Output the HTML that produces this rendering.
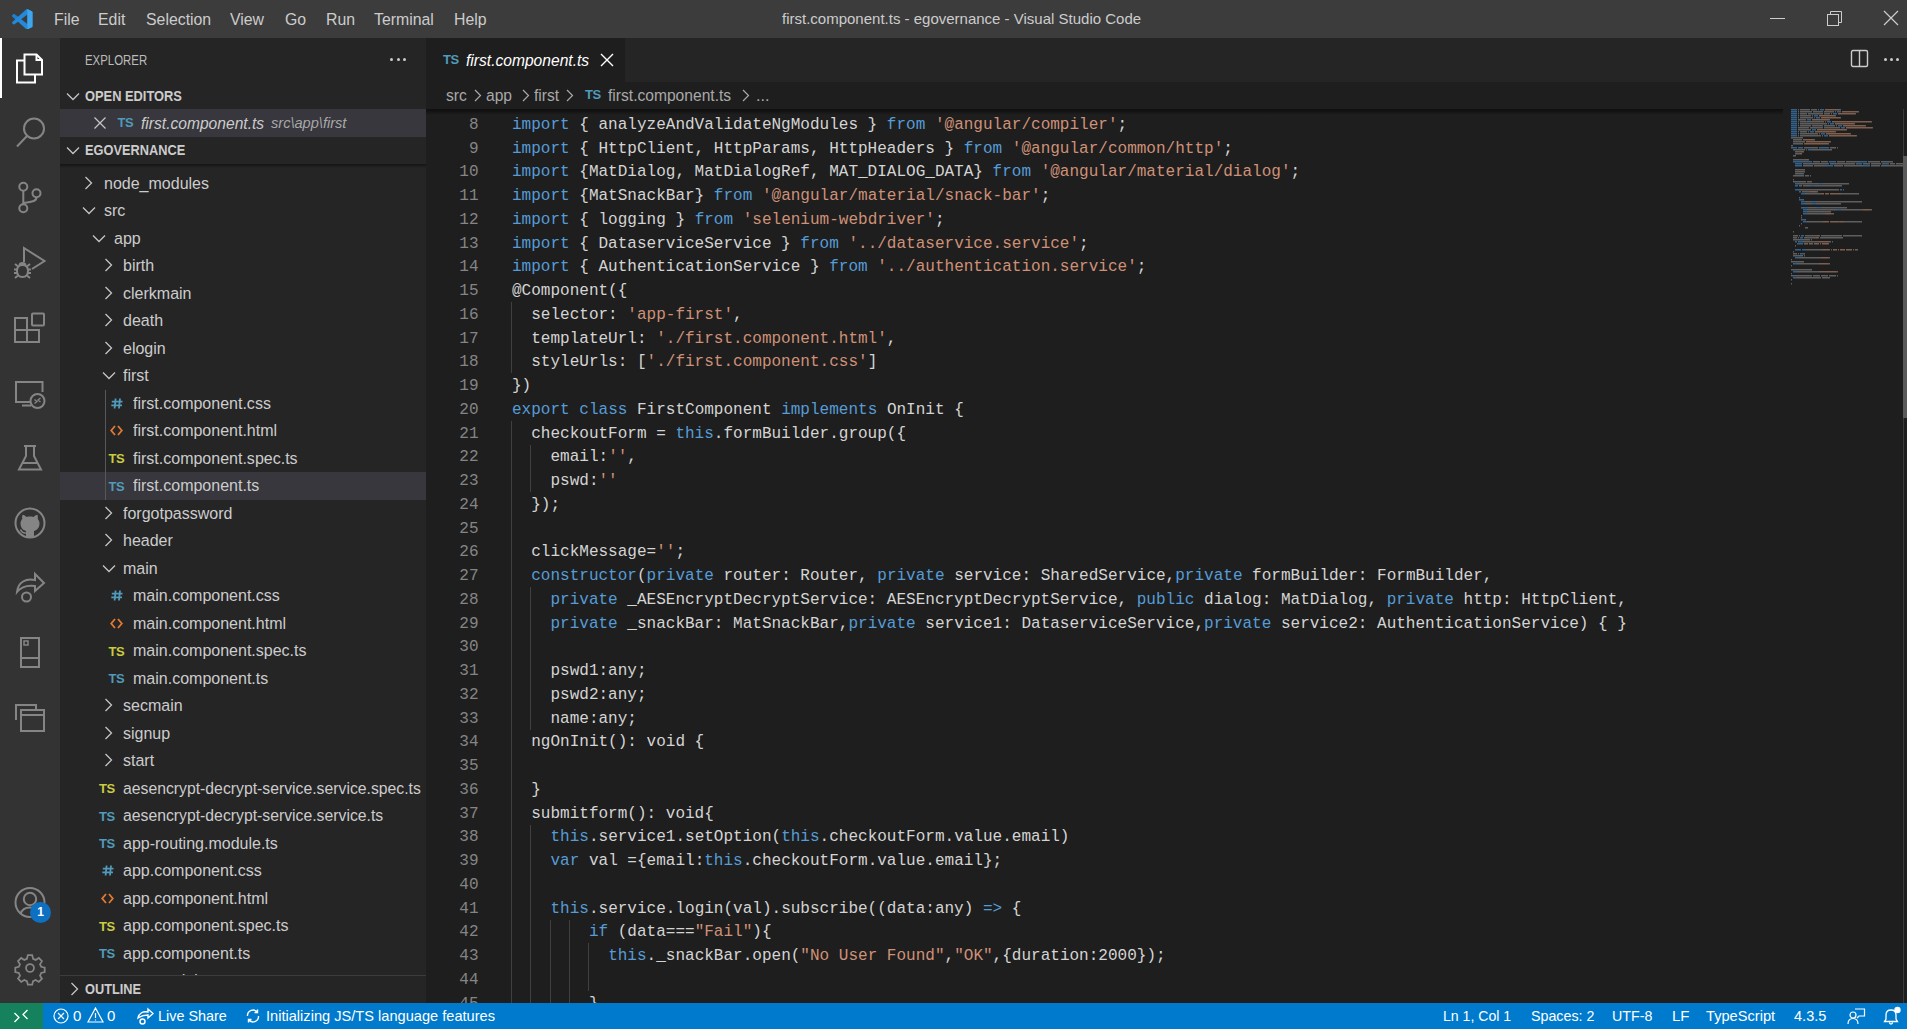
<!DOCTYPE html><html><head><meta charset="utf-8"><style>
*{box-sizing:border-box;margin:0;padding:0}
html,body{width:1907px;height:1029px;overflow:hidden;background:#1e1e1e;font-family:"Liberation Sans", sans-serif;}
.a{position:absolute}
.t{position:absolute;white-space:pre;line-height:1}
.code{position:absolute;white-space:pre;font-family:"Liberation Mono", monospace;font-size:16.03px;line-height:23.75px;color:#d4d4d4;height:23.75px}
.ln{position:absolute;white-space:pre;font-family:"Liberation Mono", monospace;font-size:16.03px;line-height:23.75px;color:#858585;text-align:right;width:60px;left:420px;height:23.75px}
.k{color:#569cd6} .s{color:#ce9178}
.g{position:absolute;width:1px;background:#404040}
.row{position:absolute;left:60px;width:366px;height:27.5px}
.rt{position:absolute;white-space:pre;font-size:16.25px;line-height:27.5px;color:#cccccc;top:0}
</style></head><body><div class="a" style="left:0;top:0;width:1907px;height:38px;background:#3c3c3c"></div><svg class="a" style="left:12px;top:8.8px" width="20.5" height="20.5" viewBox="0 0 100 100">
<path fill-rule="evenodd" fill="#2389d8" d="M70.9119 99.3171C72.4869 99.9307 74.2828 99.8914 75.8725 99.1264L96.4608 89.2197C98.6242 88.1787 100 85.9892 100 83.5872V16.4133C100 14.0113 98.6243 11.8218 96.4609 10.7808L75.8725 0.873756C73.7862 -0.130129 71.3446 0.11576 69.5135 1.44695C69.252 1.63711 69.0028 1.84943 68.769 2.08341L29.3551 38.0415L12.1872 25.0096C10.589 23.7965 8.35363 23.8959 6.86933 25.2461L1.36303 30.2549C-0.452552 31.9064 -0.454633 34.7627 1.35853 36.417L16.2471 50.0001L1.35853 63.5832C-0.454633 65.2374 -0.452552 68.0938 1.36303 69.7453L6.86933 74.7541C8.35363 76.1043 10.589 76.2037 12.1872 74.9905L29.3551 61.9587L68.769 97.9167C69.3925 98.5406 70.1246 99.0104 70.9119 99.3171ZM75.0152 27.2989L45.1091 50.0001L75.0152 72.7012V27.2989Z"/>
<path fill="#3ea6ec" d="M75.0152 0.6 L96.4609 10.7808C98.6243 11.8218 100 14.0113 100 16.4133V83.5872C100 85.9892 98.6242 88.1787 96.4608 89.2197L75.8725 99.1264L75.0152 99.5Z"/>
<path fill="#1b78c4" d="M29.3551 38.0415L12.1872 25.0096C10.589 23.7965 8.35363 23.8959 6.86933 25.2461L1.36303 30.2549C-0.452552 31.9064 -0.454633 34.7627 1.35853 36.417L16.2471 50.0001L29.3551 38.0415Z" opacity="0.6"/>
</svg><div class="t" style="left:54px;top:11px;font-size:16.25px;color:#cccccc;transform:scaleX(0.975);transform-origin:0 0">File</div><div class="t" style="left:98px;top:11px;font-size:16.25px;color:#cccccc;transform:scaleX(0.975);transform-origin:0 0">Edit</div><div class="t" style="left:145.5px;top:11px;font-size:16.25px;color:#cccccc;transform:scaleX(0.975);transform-origin:0 0">Selection</div><div class="t" style="left:230px;top:11px;font-size:16.25px;color:#cccccc;transform:scaleX(0.975);transform-origin:0 0">View</div><div class="t" style="left:284.5px;top:11px;font-size:16.25px;color:#cccccc;transform:scaleX(0.975);transform-origin:0 0">Go</div><div class="t" style="left:325.5px;top:11px;font-size:16.25px;color:#cccccc;transform:scaleX(0.975);transform-origin:0 0">Run</div><div class="t" style="left:373.5px;top:11px;font-size:16.25px;color:#cccccc;transform:scaleX(0.975);transform-origin:0 0">Terminal</div><div class="t" style="left:454px;top:11px;font-size:16.25px;color:#cccccc;transform:scaleX(0.975);transform-origin:0 0">Help</div><div class="t" style="left:782px;top:11px;font-size:15px;color:#cccccc">first.component.ts - egovernance - Visual Studio Code</div><div class="a" style="left:1770px;top:18px;width:15px;height:1px;background:#cccccc"></div><svg class="a" style="left:1826px;top:10px" width="18" height="18" viewBox="0 0 18 18" fill="none" stroke="#cccccc" stroke-width="1">
<rect x="1.5" y="4.5" width="11" height="11"/><path d="M4.5 4.5 V1.5 H15.5 V12.5 H12.5"/></svg><svg class="a" style="left:1883px;top:10px" width="16" height="16" viewBox="0 0 16 16" stroke="#cccccc" stroke-width="1.2">
<path d="M1 1 L15 15 M15 1 L1 15"/></svg><div class="a" style="left:0;top:38px;width:60px;height:965px;background:#333333"></div><div class="a" style="left:0;top:38px;width:2px;height:60px;background:#ffffff"></div><svg class="a" style="left:0;top:38px" width="60" height="965" viewBox="0 38 60 965" fill="none" stroke="#858585" stroke-width="2">
<g stroke="#ffffff">
<path d="M24.5 54.5 H36.5 L42 60 V74.5 H24.5 Z"/>
<path d="M36.5 54.5 V60 H42"/>
<path d="M24.5 60.5 H17 V82.5 H35 V74.5"/>
</g>
<circle cx="34" cy="128.5" r="10"/>
<path d="M27 136 L17 146.5"/>
<circle cx="23.3" cy="186.8" r="4"/>
<circle cx="36.5" cy="193.2" r="4"/>
<circle cx="23.3" cy="208.2" r="4"/>
<path d="M23.3 191 V204 M36.5 197.5 C36.5 202 30 202 24 203"/>
<path d="M24 262 V248 L44.5 261 L32 269"/>
<path d="M22.5 265 c-3.5 0 -5.5 2.5 -5.5 6 c0 3.5 2 6 5.5 6 c3.5 0 5.5 -2.5 5.5 -6 c0 -3.5 -2 -6 -5.5 -6 z M19.5 265.5 c0 -1.5 1.3 -2.5 3 -2.5 c1.7 0 3 1 3 2.5 M17 269.5 h-3 M17 273 h-3 M28 269.5 h3 M28 273 h3 M17.5 276 l-2.5 2 M27.5 276 l2.5 2 M17.5 266 l-2.5 -2 M27.5 266 l2.5 -2"/>
<rect x="15" y="330" width="12" height="12"/><rect x="15" y="318" width="12" height="12"/><rect x="27" y="330" width="12" height="12"/>
<rect x="32" y="313.5" width="12" height="12" rx="1"/>
<path d="M42.5 392 V382 H16 V402 H30 M22 405.5 H31"/>
<circle cx="37.5" cy="401" r="7"/>
<path d="M34.5 399.5 l2.5 2 l-2.5 2 M40.5 398 l-2.5 2 l2.5 2" stroke-width="1.4"/>
<path d="M24 446 H36 M26 446 V456 L19 469.5 H41 L34 456 V446 M22 463 H38"/>
<circle cx="30" cy="523" r="14.5"/>
<path d="M26 537.5 V531 C22.3 530 20.5 527 20.5 523.5 C20.5 521.5 21.3 520 22.3 519 C22 518 22 516.5 22.6 514.8 C24 514.8 25.5 516 26.5 517 C28.5 516.4 31.5 516.4 33.5 517 C34.5 516 36 514.8 37.4 514.8 C38 516.5 38 518 37.7 519 C38.7 520 39.5 521.5 39.5 523.5 C39.5 527 37.7 530 34 531 V537.5 Z" fill="#858585" stroke="none"/>
<path d="M26 533 C23.5 533.3 21.5 532 20.5 529.5" stroke-width="1.6"/>
<path d="M17 592 C18 582 26 578 35 580 V574 L44 583 L35 591 V586 C28 585 21 587 17 592 Z"/>
<circle cx="26.5" cy="597" r="4.5"/>
<rect x="21" y="638" width="18" height="29"/><path d="M21 658 H39"/><rect x="24" y="641" width="4" height="4" stroke-width="1.5"/>
<path d="M16 720 V705 H36 V709"/><rect x="21" y="710" width="23" height="21"/><path d="M21 715 H44"/>
<circle cx="30" cy="902.5" r="14.5"/>
<circle cx="30" cy="899" r="6.2"/>
<path d="M20.5 914 C22 909 26 907.5 30 907.5 C34 907.5 38 909 39.5 914"/>
<g transform="translate(30 968) scale(0.88)">
<path d="M-2.5 -14.5 h5 l1 4 l3 1.3 l3.5 -2.2 l3.6 3.6 l-2.2 3.5 l1.3 3 l4 1 v5 l-4 1 l-1.3 3 l2.2 3.5 l-3.6 3.6 l-3.5 -2.2 l-3 1.3 l-1 4 h-5 l-1 -4 l-3 -1.3 l-3.5 2.2 l-3.6 -3.6 l2.2 -3.5 l-1.3 -3 l-4 -1 v-5 l4 -1 l1.3 -3 l-2.2 -3.5 l3.6 -3.6 l3.5 2.2 l3 -1.3 z"/>
<circle cx="0" cy="0" r="4.5"/>
</g>
</svg><div class="a" style="left:30px;top:902px;width:21px;height:21px;border-radius:50%;background:#0e70c0"></div><div class="t" style="left:30px;top:906px;width:21px;text-align:center;font-size:12px;font-weight:bold;color:#fff">1</div><div class="a" style="left:60px;top:38px;width:366px;height:965px;background:#252526"></div><div class="t" style="left:85px;top:54px;font-size:13.75px;color:#bbbbbb;transform:scaleX(0.83);transform-origin:0 0">EXPLORER</div><div class="a" style="left:390px;top:58px;width:3px;height:3px;border-radius:50%;background:#cccccc"></div><div class="a" style="left:396.5px;top:58px;width:3px;height:3px;border-radius:50%;background:#cccccc"></div><div class="a" style="left:403px;top:58px;width:3px;height:3px;border-radius:50%;background:#cccccc"></div><svg class="a" style="left:66px;top:92px" width="14" height="9" viewBox="0 0 14 9" fill="none" stroke="#c5c5c5" stroke-width="1.3"><path d="M1 1.5 L7 7.5 L13 1.5"/></svg><div class="t" style="left:85px;top:90px;font-size:13.75px;font-weight:bold;color:#cccccc;transform:scaleX(0.935);transform-origin:0 0">OPEN EDITORS</div><div class="a" style="left:60px;top:109px;width:366px;height:27.5px;background:#37373d"></div><svg class="a" style="left:94px;top:117px" width="12" height="12" viewBox="0 0 12 12" stroke="#c5c5c5" stroke-width="1.3"><path d="M0.5 0.5 L11.5 11.5 M11.5 0.5 L0.5 11.5"/></svg><div class="t" style="left:117.5px;top:116px;font-size:13px;font-weight:bold;color:#519aba;letter-spacing:-0.5px">TS</div><div class="t" style="left:140.5px;top:115px;font-size:16.25px;font-style:italic;color:#cccccc;transform:scaleX(0.96);transform-origin:0 0">first.component.ts</div><div class="t" style="left:271px;top:116px;font-size:14.6px;font-style:italic;color:#a8a8a8">src\app\first</div><svg class="a" style="left:66px;top:146px" width="14" height="9" viewBox="0 0 14 9" fill="none" stroke="#c5c5c5" stroke-width="1.3"><path d="M1 1.5 L7 7.5 L13 1.5"/></svg><div class="t" style="left:85px;top:144px;font-size:13.75px;font-weight:bold;color:#cccccc;transform:scaleX(0.93);transform-origin:0 0">EGOVERNANCE</div><div class="a" style="left:60px;top:164px;width:366px;height:811px;overflow:hidden"><svg class="a" style="left:24px;top:11.75px" width="9" height="14" viewBox="0 0 9 14" fill="none" stroke="#c5c5c5" stroke-width="1.3"><path d="M1.5 1 L7.5 7 L1.5 13"/></svg><div class="t" style="left:43.5px;top:10.75px;font-size:16.25px;color:#cccccc;transform:scaleX(0.985);transform-origin:0 0">node_modules</div><svg class="a" style="left:22px;top:42.25px" width="14" height="9" viewBox="0 0 14 9" fill="none" stroke="#c5c5c5" stroke-width="1.3"><path d="M1 1.5 L7 7.5 L13 1.5"/></svg><div class="t" style="left:43.5px;top:38.25px;font-size:16.25px;color:#cccccc;transform:scaleX(0.985);transform-origin:0 0">src</div><svg class="a" style="left:32px;top:69.75px" width="14" height="9" viewBox="0 0 14 9" fill="none" stroke="#c5c5c5" stroke-width="1.3"><path d="M1 1.5 L7 7.5 L13 1.5"/></svg><div class="t" style="left:53.5px;top:65.75px;font-size:16.25px;color:#cccccc;transform:scaleX(0.985);transform-origin:0 0">app</div><svg class="a" style="left:43.5px;top:94.25px" width="9" height="14" viewBox="0 0 9 14" fill="none" stroke="#c5c5c5" stroke-width="1.3"><path d="M1.5 1 L7.5 7 L1.5 13"/></svg><div class="t" style="left:63.0px;top:93.25px;font-size:16.25px;color:#cccccc;transform:scaleX(0.985);transform-origin:0 0">birth</div><svg class="a" style="left:43.5px;top:121.75px" width="9" height="14" viewBox="0 0 9 14" fill="none" stroke="#c5c5c5" stroke-width="1.3"><path d="M1.5 1 L7.5 7 L1.5 13"/></svg><div class="t" style="left:63.0px;top:120.75px;font-size:16.25px;color:#cccccc;transform:scaleX(0.985);transform-origin:0 0">clerkmain</div><svg class="a" style="left:43.5px;top:149.25px" width="9" height="14" viewBox="0 0 9 14" fill="none" stroke="#c5c5c5" stroke-width="1.3"><path d="M1.5 1 L7.5 7 L1.5 13"/></svg><div class="t" style="left:63.0px;top:148.25px;font-size:16.25px;color:#cccccc;transform:scaleX(0.985);transform-origin:0 0">death</div><svg class="a" style="left:43.5px;top:176.75px" width="9" height="14" viewBox="0 0 9 14" fill="none" stroke="#c5c5c5" stroke-width="1.3"><path d="M1.5 1 L7.5 7 L1.5 13"/></svg><div class="t" style="left:63.0px;top:175.75px;font-size:16.25px;color:#cccccc;transform:scaleX(0.985);transform-origin:0 0">elogin</div><svg class="a" style="left:41.5px;top:207.25px" width="14" height="9" viewBox="0 0 14 9" fill="none" stroke="#c5c5c5" stroke-width="1.3"><path d="M1 1.5 L7 7.5 L13 1.5"/></svg><div class="t" style="left:63.0px;top:203.25px;font-size:16.25px;color:#cccccc;transform:scaleX(0.985);transform-origin:0 0">first</div><svg class="a" style="left:51px;top:233.75px" width="12" height="11" viewBox="0 0 12 11" fill="none" stroke="#519aba" stroke-width="1.8"><path d="M4.6 0.5 L3.6 10.5 M9 0.5 L8 10.5 M0.8 3.6 H11.5 M0.3 7.4 H11"/></svg><div class="t" style="left:72.5px;top:230.75px;font-size:16.25px;color:#cccccc;transform:scaleX(0.985);transform-origin:0 0">first.component.css</div><svg class="a" style="left:50px;top:261.25px" width="13" height="11" viewBox="0 0 13 11" fill="none" stroke="#e37933" stroke-width="1.8"><path d="M5 1 L1.2 5.5 L5 10 M8 1 L11.8 5.5 L8 10"/></svg><div class="t" style="left:72.5px;top:258.25px;font-size:16.25px;color:#cccccc;transform:scaleX(0.985);transform-origin:0 0">first.component.html</div><div class="t" style="left:48.5px;top:288.25px;font-size:13px;font-weight:bold;color:#cbcb41;letter-spacing:-0.5px">TS</div><div class="t" style="left:72.5px;top:285.75px;font-size:16.25px;color:#cccccc;transform:scaleX(0.985);transform-origin:0 0">first.component.spec.ts</div><div class="a" style="left:0;top:308.25px;width:366px;height:27.5px;background:#37373d"></div><div class="t" style="left:48.5px;top:315.75px;font-size:13px;font-weight:bold;color:#519aba;letter-spacing:-0.5px">TS</div><div class="t" style="left:72.5px;top:313.25px;font-size:16.25px;color:#cccccc;transform:scaleX(0.985);transform-origin:0 0">first.component.ts</div><svg class="a" style="left:43.5px;top:341.75px" width="9" height="14" viewBox="0 0 9 14" fill="none" stroke="#c5c5c5" stroke-width="1.3"><path d="M1.5 1 L7.5 7 L1.5 13"/></svg><div class="t" style="left:63.0px;top:340.75px;font-size:16.25px;color:#cccccc;transform:scaleX(0.985);transform-origin:0 0">forgotpassword</div><svg class="a" style="left:43.5px;top:369.25px" width="9" height="14" viewBox="0 0 9 14" fill="none" stroke="#c5c5c5" stroke-width="1.3"><path d="M1.5 1 L7.5 7 L1.5 13"/></svg><div class="t" style="left:63.0px;top:368.25px;font-size:16.25px;color:#cccccc;transform:scaleX(0.985);transform-origin:0 0">header</div><svg class="a" style="left:41.5px;top:399.75px" width="14" height="9" viewBox="0 0 14 9" fill="none" stroke="#c5c5c5" stroke-width="1.3"><path d="M1 1.5 L7 7.5 L13 1.5"/></svg><div class="t" style="left:63.0px;top:395.75px;font-size:16.25px;color:#cccccc;transform:scaleX(0.985);transform-origin:0 0">main</div><svg class="a" style="left:51px;top:426.25px" width="12" height="11" viewBox="0 0 12 11" fill="none" stroke="#519aba" stroke-width="1.8"><path d="M4.6 0.5 L3.6 10.5 M9 0.5 L8 10.5 M0.8 3.6 H11.5 M0.3 7.4 H11"/></svg><div class="t" style="left:72.5px;top:423.25px;font-size:16.25px;color:#cccccc;transform:scaleX(0.985);transform-origin:0 0">main.component.css</div><svg class="a" style="left:50px;top:453.75px" width="13" height="11" viewBox="0 0 13 11" fill="none" stroke="#e37933" stroke-width="1.8"><path d="M5 1 L1.2 5.5 L5 10 M8 1 L11.8 5.5 L8 10"/></svg><div class="t" style="left:72.5px;top:450.75px;font-size:16.25px;color:#cccccc;transform:scaleX(0.985);transform-origin:0 0">main.component.html</div><div class="t" style="left:48.5px;top:480.75px;font-size:13px;font-weight:bold;color:#cbcb41;letter-spacing:-0.5px">TS</div><div class="t" style="left:72.5px;top:478.25px;font-size:16.25px;color:#cccccc;transform:scaleX(0.985);transform-origin:0 0">main.component.spec.ts</div><div class="t" style="left:48.5px;top:508.25px;font-size:13px;font-weight:bold;color:#519aba;letter-spacing:-0.5px">TS</div><div class="t" style="left:72.5px;top:505.75px;font-size:16.25px;color:#cccccc;transform:scaleX(0.985);transform-origin:0 0">main.component.ts</div><svg class="a" style="left:43.5px;top:534.25px" width="9" height="14" viewBox="0 0 9 14" fill="none" stroke="#c5c5c5" stroke-width="1.3"><path d="M1.5 1 L7.5 7 L1.5 13"/></svg><div class="t" style="left:63.0px;top:533.25px;font-size:16.25px;color:#cccccc;transform:scaleX(0.985);transform-origin:0 0">secmain</div><svg class="a" style="left:43.5px;top:561.75px" width="9" height="14" viewBox="0 0 9 14" fill="none" stroke="#c5c5c5" stroke-width="1.3"><path d="M1.5 1 L7.5 7 L1.5 13"/></svg><div class="t" style="left:63.0px;top:560.75px;font-size:16.25px;color:#cccccc;transform:scaleX(0.985);transform-origin:0 0">signup</div><svg class="a" style="left:43.5px;top:589.25px" width="9" height="14" viewBox="0 0 9 14" fill="none" stroke="#c5c5c5" stroke-width="1.3"><path d="M1.5 1 L7.5 7 L1.5 13"/></svg><div class="t" style="left:63.0px;top:588.25px;font-size:16.25px;color:#cccccc;transform:scaleX(0.985);transform-origin:0 0">start</div><div class="t" style="left:39.0px;top:618.25px;font-size:13px;font-weight:bold;color:#cbcb41;letter-spacing:-0.5px">TS</div><div class="t" style="left:63.0px;top:615.75px;font-size:16.25px;color:#cccccc;transform:scaleX(0.97);transform-origin:0 0">aesencrypt-decrypt-service.service.spec.ts</div><div class="t" style="left:39.0px;top:645.75px;font-size:13px;font-weight:bold;color:#519aba;letter-spacing:-0.5px">TS</div><div class="t" style="left:63.0px;top:643.25px;font-size:16.25px;color:#cccccc;transform:scaleX(0.97);transform-origin:0 0">aesencrypt-decrypt-service.service.ts</div><div class="t" style="left:39.0px;top:673.25px;font-size:13px;font-weight:bold;color:#519aba;letter-spacing:-0.5px">TS</div><div class="t" style="left:63.0px;top:670.75px;font-size:16.25px;color:#cccccc;transform:scaleX(0.985);transform-origin:0 0">app-routing.module.ts</div><svg class="a" style="left:41.5px;top:701.25px" width="12" height="11" viewBox="0 0 12 11" fill="none" stroke="#519aba" stroke-width="1.8"><path d="M4.6 0.5 L3.6 10.5 M9 0.5 L8 10.5 M0.8 3.6 H11.5 M0.3 7.4 H11"/></svg><div class="t" style="left:63.0px;top:698.25px;font-size:16.25px;color:#cccccc;transform:scaleX(0.985);transform-origin:0 0">app.component.css</div><svg class="a" style="left:40.5px;top:728.75px" width="13" height="11" viewBox="0 0 13 11" fill="none" stroke="#e37933" stroke-width="1.8"><path d="M5 1 L1.2 5.5 L5 10 M8 1 L11.8 5.5 L8 10"/></svg><div class="t" style="left:63.0px;top:725.75px;font-size:16.25px;color:#cccccc;transform:scaleX(0.985);transform-origin:0 0">app.component.html</div><div class="t" style="left:39.0px;top:755.75px;font-size:13px;font-weight:bold;color:#cbcb41;letter-spacing:-0.5px">TS</div><div class="t" style="left:63.0px;top:753.25px;font-size:16.25px;color:#cccccc;transform:scaleX(0.985);transform-origin:0 0">app.component.spec.ts</div><div class="t" style="left:39.0px;top:783.25px;font-size:13px;font-weight:bold;color:#519aba;letter-spacing:-0.5px">TS</div><div class="t" style="left:63.0px;top:780.75px;font-size:16.25px;color:#cccccc;transform:scaleX(0.985);transform-origin:0 0">app.component.ts</div><div class="t" style="left:39.0px;top:810.75px;font-size:13px;font-weight:bold;color:#519aba;letter-spacing:-0.5px">TS</div><div class="t" style="left:63.0px;top:808.25px;font-size:16.25px;color:#cccccc;transform:scaleX(0.985);transform-origin:0 0">app.module.ts</div><div class="a" style="left:45px;top:225.75px;width:1px;height:110.0px;background:#585858"></div></div><div class="a" style="left:60px;top:164px;width:366px;height:4px;background:linear-gradient(#141414,rgba(37,37,38,0))"></div><div class="a" style="left:60px;top:975px;width:366px;height:28px;background:#252526;border-top:1px solid #3c3c3c"></div><svg class="a" style="left:70px;top:982px" width="9" height="14" viewBox="0 0 9 14" fill="none" stroke="#c5c5c5" stroke-width="1.3"><path d="M1.5 1 L7.5 7 L1.5 13"/></svg><div class="t" style="left:85px;top:983px;font-size:13.75px;font-weight:bold;color:#cccccc;transform:scaleX(0.93);transform-origin:0 0">OUTLINE</div><div class="a" style="left:426px;top:38px;width:1481px;height:44px;background:#252526"></div><div class="a" style="left:426px;top:38px;width:199px;height:44px;background:#1e1e1e"></div><div class="t" style="left:443px;top:53px;font-size:13px;font-weight:bold;color:#519aba;letter-spacing:-0.5px">TS</div><div class="t" style="left:466px;top:52px;font-size:16.25px;font-style:italic;color:#ffffff;transform:scaleX(0.96);transform-origin:0 0">first.component.ts</div><svg class="a" style="left:600px;top:53px" width="14" height="14" viewBox="0 0 14 14" stroke="#ffffff" stroke-width="1.4"><path d="M1 1 L13 13 M13 1 L1 13"/></svg><svg class="a" style="left:1850px;top:49px" width="19" height="19" viewBox="0 0 19 19" fill="none" stroke="#cccccc" stroke-width="1.4"><rect x="1.5" y="1.5" width="16" height="16" rx="1.5"/><path d="M9.5 1.5 V17.5"/></svg><div class="a" style="left:1883.5px;top:57.5px;width:3px;height:3px;border-radius:50%;background:#cccccc"></div><div class="a" style="left:1889.5px;top:57.5px;width:3px;height:3px;border-radius:50%;background:#cccccc"></div><div class="a" style="left:1895.5px;top:57.5px;width:3px;height:3px;border-radius:50%;background:#cccccc"></div><div class="a" style="left:426px;top:82px;width:1481px;height:27px;background:#1e1e1e"></div><div class="t" style="left:446px;top:87px;font-size:16.25px;color:#a9a9a9;transform:scaleX(0.96);transform-origin:0 0">src</div><svg class="a" style="left:474px;top:89px" width="8" height="13" viewBox="0 0 8 13" fill="none" stroke="#a9a9a9" stroke-width="1.2"><path d="M1 1 L6.5 6.5 L1 12"/></svg><div class="t" style="left:486px;top:87px;font-size:16.25px;color:#a9a9a9;transform:scaleX(0.96);transform-origin:0 0">app</div><svg class="a" style="left:522px;top:89px" width="8" height="13" viewBox="0 0 8 13" fill="none" stroke="#a9a9a9" stroke-width="1.2"><path d="M1 1 L6.5 6.5 L1 12"/></svg><div class="t" style="left:534px;top:87px;font-size:16.25px;color:#a9a9a9;transform:scaleX(0.96);transform-origin:0 0">first</div><svg class="a" style="left:566px;top:89px" width="8" height="13" viewBox="0 0 8 13" fill="none" stroke="#a9a9a9" stroke-width="1.2"><path d="M1 1 L6.5 6.5 L1 12"/></svg><div class="t" style="left:585px;top:88px;font-size:13px;font-weight:bold;color:#519aba;letter-spacing:-0.5px">TS</div><div class="t" style="left:608px;top:87px;font-size:16.25px;color:#a9a9a9;transform:scaleX(0.96);transform-origin:0 0">first.component.ts</div><svg class="a" style="left:742px;top:89px" width="8" height="13" viewBox="0 0 8 13" fill="none" stroke="#a9a9a9" stroke-width="1.2"><path d="M1 1 L6.5 6.5 L1 12"/></svg><div class="t" style="left:756px;top:87px;font-size:16.25px;color:#a9a9a9">...</div><div class="a" style="left:426px;top:109px;width:1481px;height:894px;overflow:hidden"><div class="ln" style="left:0;top:-18.9px;width:52.5px">7</div><div class="code" style="left:86px;top:-18.9px"><span class="k">import</span> { SharedService } <span class="k">from</span> <span class="s">&#x27;../shared.service&#x27;</span>;</div><div class="ln" style="left:0;top:4.85px;width:52.5px">8</div><div class="code" style="left:86px;top:4.85px"><span class="k">import</span> { analyzeAndValidateNgModules } <span class="k">from</span> <span class="s">&#x27;@angular/compiler&#x27;</span>;</div><div class="ln" style="left:0;top:28.6px;width:52.5px">9</div><div class="code" style="left:86px;top:28.6px"><span class="k">import</span> { HttpClient, HttpParams, HttpHeaders } <span class="k">from</span> <span class="s">&#x27;@angular/common/http&#x27;</span>;</div><div class="ln" style="left:0;top:52.35px;width:52.5px">10</div><div class="code" style="left:86px;top:52.35px"><span class="k">import</span> {MatDialog, MatDialogRef, MAT_DIALOG_DATA} <span class="k">from</span> <span class="s">&#x27;@angular/material/dialog&#x27;</span>;</div><div class="ln" style="left:0;top:76.1px;width:52.5px">11</div><div class="code" style="left:86px;top:76.1px"><span class="k">import</span> {MatSnackBar} <span class="k">from</span> <span class="s">&#x27;@angular/material/snack-bar&#x27;</span>;</div><div class="ln" style="left:0;top:99.85px;width:52.5px">12</div><div class="code" style="left:86px;top:99.85px"><span class="k">import</span> { logging } <span class="k">from</span> <span class="s">&#x27;selenium-webdriver&#x27;</span>;</div><div class="ln" style="left:0;top:123.6px;width:52.5px">13</div><div class="code" style="left:86px;top:123.6px"><span class="k">import</span> { DataserviceService } <span class="k">from</span> <span class="s">&#x27;../dataservice.service&#x27;</span>;</div><div class="ln" style="left:0;top:147.35px;width:52.5px">14</div><div class="code" style="left:86px;top:147.35px"><span class="k">import</span> { AuthenticationService } <span class="k">from</span> <span class="s">&#x27;../authentication.service&#x27;</span>;</div><div class="ln" style="left:0;top:171.1px;width:52.5px">15</div><div class="code" style="left:86px;top:171.1px">@Component({</div><div class="ln" style="left:0;top:194.85px;width:52.5px">16</div><div class="g" style="left:85px;top:193.0px;height:23.75px"></div><div class="code" style="left:86px;top:194.85px">  selector: <span class="s">&#x27;app-first&#x27;</span>,</div><div class="ln" style="left:0;top:218.6px;width:52.5px">17</div><div class="g" style="left:85px;top:216.75px;height:23.75px"></div><div class="code" style="left:86px;top:218.6px">  templateUrl: <span class="s">&#x27;./first.component.html&#x27;</span>,</div><div class="ln" style="left:0;top:242.35px;width:52.5px">18</div><div class="g" style="left:85px;top:240.5px;height:23.75px"></div><div class="code" style="left:86px;top:242.35px">  styleUrls: [<span class="s">&#x27;./first.component.css&#x27;</span>]</div><div class="ln" style="left:0;top:266.1px;width:52.5px">19</div><div class="code" style="left:86px;top:266.1px">})</div><div class="ln" style="left:0;top:289.85px;width:52.5px">20</div><div class="code" style="left:86px;top:289.85px"><span class="k">export</span> <span class="k">class</span> FirstComponent <span class="k">implements</span> OnInit {</div><div class="ln" style="left:0;top:313.6px;width:52.5px">21</div><div class="g" style="left:85px;top:311.75px;height:23.75px"></div><div class="code" style="left:86px;top:313.6px">  checkoutForm = <span class="k">this</span>.formBuilder.group({</div><div class="ln" style="left:0;top:337.35px;width:52.5px">22</div><div class="g" style="left:85px;top:335.5px;height:23.75px"></div><div class="g" style="left:104px;top:335.5px;height:23.75px"></div><div class="code" style="left:86px;top:337.35px">    email:<span class="s">&#x27;&#x27;</span>,</div><div class="ln" style="left:0;top:361.1px;width:52.5px">23</div><div class="g" style="left:85px;top:359.25px;height:23.75px"></div><div class="g" style="left:104px;top:359.25px;height:23.75px"></div><div class="code" style="left:86px;top:361.1px">    pswd:<span class="s">&#x27;&#x27;</span></div><div class="ln" style="left:0;top:384.85px;width:52.5px">24</div><div class="g" style="left:85px;top:383.0px;height:23.75px"></div><div class="code" style="left:86px;top:384.85px">  });</div><div class="ln" style="left:0;top:408.6px;width:52.5px">25</div><div class="g" style="left:85px;top:406.75px;height:23.75px"></div><div class="code" style="left:86px;top:408.6px"></div><div class="ln" style="left:0;top:432.35px;width:52.5px">26</div><div class="g" style="left:85px;top:430.5px;height:23.75px"></div><div class="code" style="left:86px;top:432.35px">  clickMessage=<span class="s">&#x27;&#x27;</span>;</div><div class="ln" style="left:0;top:456.1px;width:52.5px">27</div><div class="g" style="left:85px;top:454.25px;height:23.75px"></div><div class="code" style="left:86px;top:456.1px">  <span class="k">constructor</span>(<span class="k">private</span> router: Router, <span class="k">private</span> service: SharedService,<span class="k">private</span> formBuilder: FormBuilder,</div><div class="ln" style="left:0;top:479.85px;width:52.5px">28</div><div class="g" style="left:85px;top:478.0px;height:23.75px"></div><div class="g" style="left:104px;top:478.0px;height:23.75px"></div><div class="code" style="left:86px;top:479.85px">    <span class="k">private</span> _AESEncryptDecryptService: AESEncryptDecryptService, <span class="k">public</span> dialog: MatDialog, <span class="k">private</span> http: HttpClient,</div><div class="ln" style="left:0;top:503.6px;width:52.5px">29</div><div class="g" style="left:85px;top:501.75px;height:23.75px"></div><div class="g" style="left:104px;top:501.75px;height:23.75px"></div><div class="code" style="left:86px;top:503.6px">    <span class="k">private</span> _snackBar: MatSnackBar,<span class="k">private</span> service1: DataserviceService,<span class="k">private</span> service2: AuthenticationService) { }</div><div class="ln" style="left:0;top:527.35px;width:52.5px">30</div><div class="g" style="left:85px;top:525.5px;height:23.75px"></div><div class="g" style="left:104px;top:525.5px;height:23.75px"></div><div class="code" style="left:86px;top:527.35px"></div><div class="ln" style="left:0;top:551.1px;width:52.5px">31</div><div class="g" style="left:85px;top:549.25px;height:23.75px"></div><div class="g" style="left:104px;top:549.25px;height:23.75px"></div><div class="code" style="left:86px;top:551.1px">    pswd1:any;</div><div class="ln" style="left:0;top:574.85px;width:52.5px">32</div><div class="g" style="left:85px;top:573.0px;height:23.75px"></div><div class="g" style="left:104px;top:573.0px;height:23.75px"></div><div class="code" style="left:86px;top:574.85px">    pswd2:any;</div><div class="ln" style="left:0;top:598.6px;width:52.5px">33</div><div class="g" style="left:85px;top:596.75px;height:23.75px"></div><div class="g" style="left:104px;top:596.75px;height:23.75px"></div><div class="code" style="left:86px;top:598.6px">    name:any;</div><div class="ln" style="left:0;top:622.35px;width:52.5px">34</div><div class="g" style="left:85px;top:620.5px;height:23.75px"></div><div class="code" style="left:86px;top:622.35px">  ngOnInit(): void {</div><div class="ln" style="left:0;top:646.1px;width:52.5px">35</div><div class="g" style="left:85px;top:644.25px;height:23.75px"></div><div class="code" style="left:86px;top:646.1px"></div><div class="ln" style="left:0;top:669.85px;width:52.5px">36</div><div class="g" style="left:85px;top:668.0px;height:23.75px"></div><div class="code" style="left:86px;top:669.85px">  }</div><div class="ln" style="left:0;top:693.6px;width:52.5px">37</div><div class="g" style="left:85px;top:691.75px;height:23.75px"></div><div class="code" style="left:86px;top:693.6px">  submitform(): void{</div><div class="ln" style="left:0;top:717.35px;width:52.5px">38</div><div class="g" style="left:85px;top:715.5px;height:23.75px"></div><div class="g" style="left:104px;top:715.5px;height:23.75px"></div><div class="code" style="left:86px;top:717.35px">    <span class="k">this</span>.service1.setOption(<span class="k">this</span>.checkoutForm.value.email)</div><div class="ln" style="left:0;top:741.1px;width:52.5px">39</div><div class="g" style="left:85px;top:739.25px;height:23.75px"></div><div class="g" style="left:104px;top:739.25px;height:23.75px"></div><div class="code" style="left:86px;top:741.1px">    <span class="k">var</span> val ={email:<span class="k">this</span>.checkoutForm.value.email};</div><div class="ln" style="left:0;top:764.85px;width:52.5px">40</div><div class="g" style="left:85px;top:763.0px;height:23.75px"></div><div class="g" style="left:104px;top:763.0px;height:23.75px"></div><div class="code" style="left:86px;top:764.85px"></div><div class="ln" style="left:0;top:788.6px;width:52.5px">41</div><div class="g" style="left:85px;top:786.75px;height:23.75px"></div><div class="g" style="left:104px;top:786.75px;height:23.75px"></div><div class="code" style="left:86px;top:788.6px">    <span class="k">this</span>.service.login(val).subscribe((data:any) <span class="k">=&gt;</span> {</div><div class="ln" style="left:0;top:812.35px;width:52.5px">42</div><div class="g" style="left:85px;top:810.5px;height:23.75px"></div><div class="g" style="left:104px;top:810.5px;height:23.75px"></div><div class="g" style="left:124px;top:810.5px;height:23.75px"></div><div class="g" style="left:143px;top:810.5px;height:23.75px"></div><div class="code" style="left:86px;top:812.35px">        <span class="k">if</span> (data===<span class="s">&quot;Fail&quot;</span>){</div><div class="ln" style="left:0;top:836.1px;width:52.5px">43</div><div class="g" style="left:85px;top:834.25px;height:23.75px"></div><div class="g" style="left:104px;top:834.25px;height:23.75px"></div><div class="g" style="left:124px;top:834.25px;height:23.75px"></div><div class="g" style="left:143px;top:834.25px;height:23.75px"></div><div class="g" style="left:162px;top:834.25px;height:23.75px"></div><div class="code" style="left:86px;top:836.1px">          <span class="k">this</span>._snackBar.open(<span class="s">&quot;No User Found&quot;</span>,<span class="s">&quot;OK&quot;</span>,{duration:2000});</div><div class="ln" style="left:0;top:859.85px;width:52.5px">44</div><div class="g" style="left:85px;top:858.0px;height:23.75px"></div><div class="g" style="left:104px;top:858.0px;height:23.75px"></div><div class="g" style="left:124px;top:858.0px;height:23.75px"></div><div class="g" style="left:143px;top:858.0px;height:23.75px"></div><div class="g" style="left:162px;top:858.0px;height:23.75px"></div><div class="code" style="left:86px;top:859.85px"></div><div class="ln" style="left:0;top:883.6px;width:52.5px">45</div><div class="g" style="left:85px;top:881.75px;height:23.75px"></div><div class="g" style="left:104px;top:881.75px;height:23.75px"></div><div class="g" style="left:124px;top:881.75px;height:23.75px"></div><div class="g" style="left:143px;top:881.75px;height:23.75px"></div><div class="code" style="left:86px;top:883.6px">        }</div><div class="ln" style="left:0;top:907.35px;width:52.5px">46</div><div class="g" style="left:85px;top:905.5px;height:23.75px"></div><div class="g" style="left:104px;top:905.5px;height:23.75px"></div><div class="g" style="left:124px;top:905.5px;height:23.75px"></div><div class="g" style="left:143px;top:905.5px;height:23.75px"></div><div class="code" style="left:86px;top:907.35px"></div></div><div class="a" style="left:426px;top:109px;width:1357px;height:6px;background:linear-gradient(rgba(0,0,0,0.55),rgba(0,0,0,0))"></div><svg class="a" style="left:0;top:0" width="1907" height="1029" viewBox="0 0 1907 1029"><rect x="1791" y="109.0" width="6" height="1.5" fill="#32628c"/><rect x="1798" y="109.0" width="1" height="1.5" fill="#5e5e5e"/><rect x="1800" y="109.0" width="9" height="1.5" fill="#5e5e5e"/><rect x="1809" y="109.0" width="1" height="1.5" fill="#5e5e5e"/><rect x="1811" y="109.0" width="6" height="1.5" fill="#5e5e5e"/><rect x="1818" y="109.0" width="1" height="1.5" fill="#5e5e5e"/><rect x="1820" y="109.0" width="4" height="1.5" fill="#32628c"/><rect x="1825" y="109.0" width="15" height="1.5" fill="#7e5e4c"/><rect x="1840" y="109.0" width="1" height="1.5" fill="#5e5e5e"/><rect x="1791" y="111.0" width="6" height="1.5" fill="#32628c"/><rect x="1798" y="111.0" width="1" height="1.5" fill="#5e5e5e"/><rect x="1800" y="111.0" width="11" height="1.5" fill="#5e5e5e"/><rect x="1811" y="111.0" width="1" height="1.5" fill="#5e5e5e"/><rect x="1813" y="111.0" width="9" height="1.5" fill="#5e5e5e"/><rect x="1822" y="111.0" width="1" height="1.5" fill="#5e5e5e"/><rect x="1824" y="111.0" width="10" height="1.5" fill="#5e5e5e"/><rect x="1835" y="111.0" width="1" height="1.5" fill="#5e5e5e"/><rect x="1837" y="111.0" width="4" height="1.5" fill="#32628c"/><rect x="1842" y="111.0" width="16" height="1.5" fill="#7e5e4c"/><rect x="1858" y="111.0" width="1" height="1.5" fill="#5e5e5e"/><rect x="1791" y="113.0" width="6" height="1.5" fill="#32628c"/><rect x="1798" y="113.0" width="1" height="1.5" fill="#5e5e5e"/><rect x="1800" y="113.0" width="6" height="1.5" fill="#5e5e5e"/><rect x="1806" y="113.0" width="1" height="1.5" fill="#5e5e5e"/><rect x="1808" y="113.0" width="14" height="1.5" fill="#5e5e5e"/><rect x="1822" y="113.0" width="1" height="1.5" fill="#5e5e5e"/><rect x="1824" y="113.0" width="6" height="1.5" fill="#5e5e5e"/><rect x="1831" y="113.0" width="1" height="1.5" fill="#5e5e5e"/><rect x="1833" y="113.0" width="4" height="1.5" fill="#32628c"/><rect x="1838" y="113.0" width="17" height="1.5" fill="#7e5e4c"/><rect x="1855" y="113.0" width="1" height="1.5" fill="#5e5e5e"/><rect x="1791" y="115.0" width="6" height="1.5" fill="#32628c"/><rect x="1798" y="115.0" width="1" height="1.5" fill="#5e5e5e"/><rect x="1800" y="115.0" width="11" height="1.5" fill="#5e5e5e"/><rect x="1812" y="115.0" width="1" height="1.5" fill="#5e5e5e"/><rect x="1814" y="115.0" width="4" height="1.5" fill="#32628c"/><rect x="1819" y="115.0" width="16" height="1.5" fill="#7e5e4c"/><rect x="1835" y="115.0" width="1" height="1.5" fill="#5e5e5e"/><rect x="1791" y="117.0" width="6" height="1.5" fill="#32628c"/><rect x="1798" y="117.0" width="1" height="1.5" fill="#5e5e5e"/><rect x="1800" y="117.0" width="13" height="1.5" fill="#5e5e5e"/><rect x="1814" y="117.0" width="1" height="1.5" fill="#5e5e5e"/><rect x="1816" y="117.0" width="4" height="1.5" fill="#32628c"/><rect x="1821" y="117.0" width="19" height="1.5" fill="#7e5e4c"/><rect x="1840" y="117.0" width="1" height="1.5" fill="#5e5e5e"/><rect x="1791" y="119.0" width="6" height="1.5" fill="#32628c"/><rect x="1798" y="119.0" width="1" height="1.5" fill="#5e5e5e"/><rect x="1799" y="119.0" width="6" height="1.5" fill="#5e5e5e"/><rect x="1805" y="119.0" width="1" height="1.5" fill="#5e5e5e"/><rect x="1807" y="119.0" width="4" height="1.5" fill="#32628c"/><rect x="1812" y="119.0" width="17" height="1.5" fill="#7e5e4c"/><rect x="1829" y="119.0" width="1" height="1.5" fill="#5e5e5e"/><rect x="1791" y="121.0" width="6" height="1.5" fill="#32628c"/><rect x="1798" y="121.0" width="1" height="1.5" fill="#5e5e5e"/><rect x="1800" y="121.0" width="24" height="1.5" fill="#5e5e5e"/><rect x="1825" y="121.0" width="1" height="1.5" fill="#5e5e5e"/><rect x="1827" y="121.0" width="4" height="1.5" fill="#32628c"/><rect x="1832" y="121.0" width="39" height="1.5" fill="#7e5e4c"/><rect x="1871" y="121.0" width="1" height="1.5" fill="#5e5e5e"/><rect x="1791" y="123.0" width="6" height="1.5" fill="#32628c"/><rect x="1798" y="123.0" width="1" height="1.5" fill="#5e5e5e"/><rect x="1800" y="123.0" width="27" height="1.5" fill="#5e5e5e"/><rect x="1828" y="123.0" width="1" height="1.5" fill="#5e5e5e"/><rect x="1830" y="123.0" width="4" height="1.5" fill="#32628c"/><rect x="1835" y="123.0" width="19" height="1.5" fill="#7e5e4c"/><rect x="1854" y="123.0" width="1" height="1.5" fill="#5e5e5e"/><rect x="1791" y="125.0" width="6" height="1.5" fill="#32628c"/><rect x="1798" y="125.0" width="1" height="1.5" fill="#5e5e5e"/><rect x="1800" y="125.0" width="10" height="1.5" fill="#5e5e5e"/><rect x="1810" y="125.0" width="1" height="1.5" fill="#5e5e5e"/><rect x="1812" y="125.0" width="10" height="1.5" fill="#5e5e5e"/><rect x="1822" y="125.0" width="1" height="1.5" fill="#5e5e5e"/><rect x="1824" y="125.0" width="11" height="1.5" fill="#5e5e5e"/><rect x="1836" y="125.0" width="1" height="1.5" fill="#5e5e5e"/><rect x="1838" y="125.0" width="4" height="1.5" fill="#32628c"/><rect x="1843" y="125.0" width="22" height="1.5" fill="#7e5e4c"/><rect x="1865" y="125.0" width="1" height="1.5" fill="#5e5e5e"/><rect x="1791" y="127.0" width="6" height="1.5" fill="#32628c"/><rect x="1798" y="127.0" width="1" height="1.5" fill="#5e5e5e"/><rect x="1799" y="127.0" width="9" height="1.5" fill="#5e5e5e"/><rect x="1808" y="127.0" width="1" height="1.5" fill="#5e5e5e"/><rect x="1810" y="127.0" width="12" height="1.5" fill="#5e5e5e"/><rect x="1822" y="127.0" width="1" height="1.5" fill="#5e5e5e"/><rect x="1824" y="127.0" width="15" height="1.5" fill="#5e5e5e"/><rect x="1839" y="127.0" width="1" height="1.5" fill="#5e5e5e"/><rect x="1841" y="127.0" width="4" height="1.5" fill="#32628c"/><rect x="1846" y="127.0" width="26" height="1.5" fill="#7e5e4c"/><rect x="1872" y="127.0" width="1" height="1.5" fill="#5e5e5e"/><rect x="1791" y="129.0" width="6" height="1.5" fill="#32628c"/><rect x="1798" y="129.0" width="1" height="1.5" fill="#5e5e5e"/><rect x="1799" y="129.0" width="11" height="1.5" fill="#5e5e5e"/><rect x="1810" y="129.0" width="1" height="1.5" fill="#5e5e5e"/><rect x="1812" y="129.0" width="4" height="1.5" fill="#32628c"/><rect x="1817" y="129.0" width="29" height="1.5" fill="#7e5e4c"/><rect x="1846" y="129.0" width="1" height="1.5" fill="#5e5e5e"/><rect x="1791" y="131.0" width="6" height="1.5" fill="#32628c"/><rect x="1798" y="131.0" width="1" height="1.5" fill="#5e5e5e"/><rect x="1800" y="131.0" width="7" height="1.5" fill="#5e5e5e"/><rect x="1808" y="131.0" width="1" height="1.5" fill="#5e5e5e"/><rect x="1810" y="131.0" width="4" height="1.5" fill="#32628c"/><rect x="1815" y="131.0" width="20" height="1.5" fill="#7e5e4c"/><rect x="1835" y="131.0" width="1" height="1.5" fill="#5e5e5e"/><rect x="1791" y="133.0" width="6" height="1.5" fill="#32628c"/><rect x="1798" y="133.0" width="1" height="1.5" fill="#5e5e5e"/><rect x="1800" y="133.0" width="18" height="1.5" fill="#5e5e5e"/><rect x="1819" y="133.0" width="1" height="1.5" fill="#5e5e5e"/><rect x="1821" y="133.0" width="4" height="1.5" fill="#32628c"/><rect x="1826" y="133.0" width="24" height="1.5" fill="#7e5e4c"/><rect x="1850" y="133.0" width="1" height="1.5" fill="#5e5e5e"/><rect x="1791" y="135.0" width="6" height="1.5" fill="#32628c"/><rect x="1798" y="135.0" width="1" height="1.5" fill="#5e5e5e"/><rect x="1800" y="135.0" width="21" height="1.5" fill="#5e5e5e"/><rect x="1822" y="135.0" width="1" height="1.5" fill="#5e5e5e"/><rect x="1824" y="135.0" width="4" height="1.5" fill="#32628c"/><rect x="1829" y="135.0" width="27" height="1.5" fill="#7e5e4c"/><rect x="1856" y="135.0" width="1" height="1.5" fill="#5e5e5e"/><rect x="1791" y="137.0" width="10" height="1.5" fill="#5e5e5e"/><rect x="1801" y="137.0" width="1" height="1.5" fill="#5e5e5e"/><rect x="1802" y="137.0" width="1" height="1.5" fill="#5e5e5e"/><rect x="1793" y="139.0" width="8" height="1.5" fill="#5e5e5e"/><rect x="1801" y="139.0" width="1" height="1.5" fill="#5e5e5e"/><rect x="1803" y="139.0" width="11" height="1.5" fill="#7e5e4c"/><rect x="1814" y="139.0" width="1" height="1.5" fill="#5e5e5e"/><rect x="1793" y="141.0" width="11" height="1.5" fill="#5e5e5e"/><rect x="1804" y="141.0" width="1" height="1.5" fill="#5e5e5e"/><rect x="1806" y="141.0" width="24" height="1.5" fill="#7e5e4c"/><rect x="1830" y="141.0" width="1" height="1.5" fill="#5e5e5e"/><rect x="1793" y="143.0" width="9" height="1.5" fill="#5e5e5e"/><rect x="1802" y="143.0" width="1" height="1.5" fill="#5e5e5e"/><rect x="1804" y="143.0" width="1" height="1.5" fill="#5e5e5e"/><rect x="1805" y="143.0" width="23" height="1.5" fill="#7e5e4c"/><rect x="1828" y="143.0" width="1" height="1.5" fill="#5e5e5e"/><rect x="1791" y="145.0" width="1" height="1.5" fill="#5e5e5e"/><rect x="1792" y="145.0" width="1" height="1.5" fill="#5e5e5e"/><rect x="1791" y="147.0" width="6" height="1.5" fill="#32628c"/><rect x="1798" y="147.0" width="5" height="1.5" fill="#32628c"/><rect x="1804" y="147.0" width="14" height="1.5" fill="#5e5e5e"/><rect x="1819" y="147.0" width="10" height="1.5" fill="#32628c"/><rect x="1830" y="147.0" width="6" height="1.5" fill="#5e5e5e"/><rect x="1837" y="147.0" width="1" height="1.5" fill="#5e5e5e"/><rect x="1793" y="149.0" width="12" height="1.5" fill="#5e5e5e"/><rect x="1806" y="149.0" width="1" height="1.5" fill="#5e5e5e"/><rect x="1808" y="149.0" width="4" height="1.5" fill="#32628c"/><rect x="1812" y="149.0" width="1" height="1.5" fill="#5e5e5e"/><rect x="1813" y="149.0" width="11" height="1.5" fill="#5e5e5e"/><rect x="1824" y="149.0" width="1" height="1.5" fill="#5e5e5e"/><rect x="1825" y="149.0" width="5" height="1.5" fill="#5e5e5e"/><rect x="1830" y="149.0" width="1" height="1.5" fill="#5e5e5e"/><rect x="1831" y="149.0" width="1" height="1.5" fill="#5e5e5e"/><rect x="1795" y="151.0" width="5" height="1.5" fill="#5e5e5e"/><rect x="1800" y="151.0" width="1" height="1.5" fill="#5e5e5e"/><rect x="1801" y="151.0" width="2" height="1.5" fill="#7e5e4c"/><rect x="1803" y="151.0" width="1" height="1.5" fill="#5e5e5e"/><rect x="1795" y="153.0" width="4" height="1.5" fill="#5e5e5e"/><rect x="1799" y="153.0" width="1" height="1.5" fill="#5e5e5e"/><rect x="1800" y="153.0" width="2" height="1.5" fill="#7e5e4c"/><rect x="1793" y="155.0" width="1" height="1.5" fill="#5e5e5e"/><rect x="1794" y="155.0" width="1" height="1.5" fill="#5e5e5e"/><rect x="1795" y="155.0" width="1" height="1.5" fill="#5e5e5e"/><rect x="1793" y="159.0" width="12" height="1.5" fill="#5e5e5e"/><rect x="1805" y="159.0" width="1" height="1.5" fill="#5e5e5e"/><rect x="1806" y="159.0" width="2" height="1.5" fill="#7e5e4c"/><rect x="1808" y="159.0" width="1" height="1.5" fill="#5e5e5e"/><rect x="1793" y="161.0" width="11" height="1.5" fill="#32628c"/><rect x="1804" y="161.0" width="1" height="1.5" fill="#5e5e5e"/><rect x="1805" y="161.0" width="7" height="1.5" fill="#32628c"/><rect x="1813" y="161.0" width="6" height="1.5" fill="#5e5e5e"/><rect x="1819" y="161.0" width="1" height="1.5" fill="#5e5e5e"/><rect x="1821" y="161.0" width="6" height="1.5" fill="#5e5e5e"/><rect x="1827" y="161.0" width="1" height="1.5" fill="#5e5e5e"/><rect x="1829" y="161.0" width="7" height="1.5" fill="#32628c"/><rect x="1837" y="161.0" width="7" height="1.5" fill="#5e5e5e"/><rect x="1844" y="161.0" width="1" height="1.5" fill="#5e5e5e"/><rect x="1846" y="161.0" width="13" height="1.5" fill="#5e5e5e"/><rect x="1859" y="161.0" width="1" height="1.5" fill="#5e5e5e"/><rect x="1860" y="161.0" width="7" height="1.5" fill="#32628c"/><rect x="1868" y="161.0" width="11" height="1.5" fill="#5e5e5e"/><rect x="1879" y="161.0" width="1" height="1.5" fill="#5e5e5e"/><rect x="1881" y="161.0" width="11" height="1.5" fill="#5e5e5e"/><rect x="1892" y="161.0" width="1" height="1.5" fill="#5e5e5e"/><rect x="1795" y="163.0" width="7" height="1.5" fill="#32628c"/><rect x="1803" y="163.0" width="25" height="1.5" fill="#5e5e5e"/><rect x="1828" y="163.0" width="1" height="1.5" fill="#5e5e5e"/><rect x="1830" y="163.0" width="24" height="1.5" fill="#5e5e5e"/><rect x="1854" y="163.0" width="1" height="1.5" fill="#5e5e5e"/><rect x="1856" y="163.0" width="6" height="1.5" fill="#32628c"/><rect x="1863" y="163.0" width="6" height="1.5" fill="#5e5e5e"/><rect x="1869" y="163.0" width="1" height="1.5" fill="#5e5e5e"/><rect x="1871" y="163.0" width="9" height="1.5" fill="#5e5e5e"/><rect x="1880" y="163.0" width="1" height="1.5" fill="#5e5e5e"/><rect x="1882" y="163.0" width="7" height="1.5" fill="#32628c"/><rect x="1890" y="163.0" width="4" height="1.5" fill="#5e5e5e"/><rect x="1894" y="163.0" width="1" height="1.5" fill="#5e5e5e"/><rect x="1896" y="163.0" width="7" height="1.5" fill="#5e5e5e"/><rect x="1795" y="165.0" width="7" height="1.5" fill="#32628c"/><rect x="1803" y="165.0" width="9" height="1.5" fill="#5e5e5e"/><rect x="1812" y="165.0" width="1" height="1.5" fill="#5e5e5e"/><rect x="1814" y="165.0" width="11" height="1.5" fill="#5e5e5e"/><rect x="1825" y="165.0" width="1" height="1.5" fill="#5e5e5e"/><rect x="1826" y="165.0" width="7" height="1.5" fill="#32628c"/><rect x="1834" y="165.0" width="8" height="1.5" fill="#5e5e5e"/><rect x="1842" y="165.0" width="1" height="1.5" fill="#5e5e5e"/><rect x="1844" y="165.0" width="18" height="1.5" fill="#5e5e5e"/><rect x="1862" y="165.0" width="1" height="1.5" fill="#5e5e5e"/><rect x="1863" y="165.0" width="7" height="1.5" fill="#32628c"/><rect x="1871" y="165.0" width="8" height="1.5" fill="#5e5e5e"/><rect x="1879" y="165.0" width="1" height="1.5" fill="#5e5e5e"/><rect x="1881" y="165.0" width="21" height="1.5" fill="#5e5e5e"/><rect x="1902" y="165.0" width="1" height="1.5" fill="#5e5e5e"/><rect x="1795" y="169.0" width="5" height="1.5" fill="#5e5e5e"/><rect x="1800" y="169.0" width="1" height="1.5" fill="#5e5e5e"/><rect x="1801" y="169.0" width="3" height="1.5" fill="#5e5e5e"/><rect x="1804" y="169.0" width="1" height="1.5" fill="#5e5e5e"/><rect x="1795" y="171.0" width="5" height="1.5" fill="#5e5e5e"/><rect x="1800" y="171.0" width="1" height="1.5" fill="#5e5e5e"/><rect x="1801" y="171.0" width="3" height="1.5" fill="#5e5e5e"/><rect x="1804" y="171.0" width="1" height="1.5" fill="#5e5e5e"/><rect x="1795" y="173.0" width="4" height="1.5" fill="#5e5e5e"/><rect x="1799" y="173.0" width="1" height="1.5" fill="#5e5e5e"/><rect x="1800" y="173.0" width="3" height="1.5" fill="#5e5e5e"/><rect x="1803" y="173.0" width="1" height="1.5" fill="#5e5e5e"/><rect x="1793" y="175.0" width="8" height="1.5" fill="#5e5e5e"/><rect x="1801" y="175.0" width="1" height="1.5" fill="#5e5e5e"/><rect x="1802" y="175.0" width="1" height="1.5" fill="#5e5e5e"/><rect x="1803" y="175.0" width="1" height="1.5" fill="#5e5e5e"/><rect x="1805" y="175.0" width="4" height="1.5" fill="#5e5e5e"/><rect x="1810" y="175.0" width="1" height="1.5" fill="#5e5e5e"/><rect x="1793" y="179.0" width="1" height="1.5" fill="#5e5e5e"/><rect x="1793" y="181.0" width="10" height="1.5" fill="#5e5e5e"/><rect x="1803" y="181.0" width="1" height="1.5" fill="#5e5e5e"/><rect x="1804" y="181.0" width="1" height="1.5" fill="#5e5e5e"/><rect x="1805" y="181.0" width="1" height="1.5" fill="#5e5e5e"/><rect x="1807" y="181.0" width="4" height="1.5" fill="#5e5e5e"/><rect x="1811" y="181.0" width="1" height="1.5" fill="#5e5e5e"/><rect x="1795" y="183.0" width="4" height="1.5" fill="#32628c"/><rect x="1799" y="183.0" width="1" height="1.5" fill="#5e5e5e"/><rect x="1800" y="183.0" width="8" height="1.5" fill="#5e5e5e"/><rect x="1808" y="183.0" width="1" height="1.5" fill="#5e5e5e"/><rect x="1809" y="183.0" width="9" height="1.5" fill="#5e5e5e"/><rect x="1818" y="183.0" width="1" height="1.5" fill="#5e5e5e"/><rect x="1819" y="183.0" width="4" height="1.5" fill="#32628c"/><rect x="1823" y="183.0" width="1" height="1.5" fill="#5e5e5e"/><rect x="1824" y="183.0" width="12" height="1.5" fill="#5e5e5e"/><rect x="1836" y="183.0" width="1" height="1.5" fill="#5e5e5e"/><rect x="1837" y="183.0" width="5" height="1.5" fill="#5e5e5e"/><rect x="1842" y="183.0" width="1" height="1.5" fill="#5e5e5e"/><rect x="1843" y="183.0" width="5" height="1.5" fill="#5e5e5e"/><rect x="1848" y="183.0" width="1" height="1.5" fill="#5e5e5e"/><rect x="1795" y="185.0" width="3" height="1.5" fill="#32628c"/><rect x="1799" y="185.0" width="3" height="1.5" fill="#5e5e5e"/><rect x="1803" y="185.0" width="1" height="1.5" fill="#5e5e5e"/><rect x="1804" y="185.0" width="1" height="1.5" fill="#5e5e5e"/><rect x="1805" y="185.0" width="5" height="1.5" fill="#5e5e5e"/><rect x="1810" y="185.0" width="1" height="1.5" fill="#5e5e5e"/><rect x="1811" y="185.0" width="4" height="1.5" fill="#32628c"/><rect x="1815" y="185.0" width="1" height="1.5" fill="#5e5e5e"/><rect x="1816" y="185.0" width="12" height="1.5" fill="#5e5e5e"/><rect x="1828" y="185.0" width="1" height="1.5" fill="#5e5e5e"/><rect x="1829" y="185.0" width="5" height="1.5" fill="#5e5e5e"/><rect x="1834" y="185.0" width="1" height="1.5" fill="#5e5e5e"/><rect x="1835" y="185.0" width="5" height="1.5" fill="#5e5e5e"/><rect x="1840" y="185.0" width="1" height="1.5" fill="#5e5e5e"/><rect x="1841" y="185.0" width="1" height="1.5" fill="#5e5e5e"/><rect x="1795" y="189.0" width="4" height="1.5" fill="#32628c"/><rect x="1799" y="189.0" width="1" height="1.5" fill="#5e5e5e"/><rect x="1800" y="189.0" width="7" height="1.5" fill="#5e5e5e"/><rect x="1807" y="189.0" width="1" height="1.5" fill="#5e5e5e"/><rect x="1808" y="189.0" width="5" height="1.5" fill="#5e5e5e"/><rect x="1813" y="189.0" width="1" height="1.5" fill="#5e5e5e"/><rect x="1814" y="189.0" width="3" height="1.5" fill="#5e5e5e"/><rect x="1817" y="189.0" width="1" height="1.5" fill="#5e5e5e"/><rect x="1818" y="189.0" width="1" height="1.5" fill="#5e5e5e"/><rect x="1819" y="189.0" width="9" height="1.5" fill="#5e5e5e"/><rect x="1828" y="189.0" width="1" height="1.5" fill="#5e5e5e"/><rect x="1829" y="189.0" width="1" height="1.5" fill="#5e5e5e"/><rect x="1830" y="189.0" width="4" height="1.5" fill="#5e5e5e"/><rect x="1834" y="189.0" width="1" height="1.5" fill="#5e5e5e"/><rect x="1835" y="189.0" width="3" height="1.5" fill="#5e5e5e"/><rect x="1838" y="189.0" width="1" height="1.5" fill="#5e5e5e"/><rect x="1840" y="189.0" width="2" height="1.5" fill="#32628c"/><rect x="1843" y="189.0" width="1" height="1.5" fill="#5e5e5e"/><rect x="1799" y="191.0" width="2" height="1.5" fill="#32628c"/><rect x="1802" y="191.0" width="1" height="1.5" fill="#5e5e5e"/><rect x="1803" y="191.0" width="4" height="1.5" fill="#5e5e5e"/><rect x="1807" y="191.0" width="1" height="1.5" fill="#5e5e5e"/><rect x="1808" y="191.0" width="1" height="1.5" fill="#5e5e5e"/><rect x="1809" y="191.0" width="1" height="1.5" fill="#5e5e5e"/><rect x="1810" y="191.0" width="6" height="1.5" fill="#7e5e4c"/><rect x="1816" y="191.0" width="1" height="1.5" fill="#5e5e5e"/><rect x="1817" y="191.0" width="1" height="1.5" fill="#5e5e5e"/><rect x="1801" y="193.0" width="4" height="1.5" fill="#32628c"/><rect x="1805" y="193.0" width="1" height="1.5" fill="#5e5e5e"/><rect x="1806" y="193.0" width="9" height="1.5" fill="#5e5e5e"/><rect x="1815" y="193.0" width="1" height="1.5" fill="#5e5e5e"/><rect x="1816" y="193.0" width="4" height="1.5" fill="#5e5e5e"/><rect x="1820" y="193.0" width="1" height="1.5" fill="#5e5e5e"/><rect x="1821" y="193.0" width="3" height="1.5" fill="#7e5e4c"/><rect x="1825" y="193.0" width="4" height="1.5" fill="#7e5e4c"/><rect x="1830" y="193.0" width="6" height="1.5" fill="#7e5e4c"/><rect x="1836" y="193.0" width="1" height="1.5" fill="#5e5e5e"/><rect x="1837" y="193.0" width="4" height="1.5" fill="#7e5e4c"/><rect x="1841" y="193.0" width="1" height="1.5" fill="#5e5e5e"/><rect x="1842" y="193.0" width="1" height="1.5" fill="#5e5e5e"/><rect x="1843" y="193.0" width="8" height="1.5" fill="#5e5e5e"/><rect x="1851" y="193.0" width="1" height="1.5" fill="#5e5e5e"/><rect x="1852" y="193.0" width="1" height="1.5" fill="#5e5e5e"/><rect x="1853" y="193.0" width="1" height="1.5" fill="#5e5e5e"/><rect x="1854" y="193.0" width="1" height="1.5" fill="#5e5e5e"/><rect x="1855" y="193.0" width="1" height="1.5" fill="#5e5e5e"/><rect x="1856" y="193.0" width="1" height="1.5" fill="#5e5e5e"/><rect x="1857" y="193.0" width="1" height="1.5" fill="#5e5e5e"/><rect x="1858" y="193.0" width="1" height="1.5" fill="#5e5e5e"/><rect x="1799" y="197.0" width="1" height="1.5" fill="#5e5e5e"/><rect x="1799" y="199.0" width="4" height="1.5" fill="#32628c"/><rect x="1803" y="199.0" width="1" height="1.5" fill="#5e5e5e"/><rect x="1801" y="201.0" width="4" height="1.5" fill="#32628c"/><rect x="1805" y="201.0" width="1" height="1.5" fill="#5e5e5e"/><rect x="1806" y="201.0" width="5" height="1.5" fill="#5e5e5e"/><rect x="1811" y="201.0" width="1" height="1.5" fill="#5e5e5e"/><rect x="1812" y="201.0" width="4" height="1.5" fill="#32628c"/><rect x="1816" y="201.0" width="1" height="1.5" fill="#5e5e5e"/><rect x="1817" y="201.0" width="25" height="1.5" fill="#5e5e5e"/><rect x="1842" y="201.0" width="1" height="1.5" fill="#5e5e5e"/><rect x="1843" y="201.0" width="7" height="1.5" fill="#5e5e5e"/><rect x="1850" y="201.0" width="1" height="1.5" fill="#5e5e5e"/><rect x="1851" y="201.0" width="4" height="1.5" fill="#5e5e5e"/><rect x="1855" y="201.0" width="1" height="1.5" fill="#5e5e5e"/><rect x="1856" y="201.0" width="4" height="1.5" fill="#5e5e5e"/><rect x="1860" y="201.0" width="1" height="1.5" fill="#5e5e5e"/><rect x="1861" y="201.0" width="1" height="1.5" fill="#5e5e5e"/><rect x="1801" y="203.0" width="4" height="1.5" fill="#32628c"/><rect x="1805" y="203.0" width="1" height="1.5" fill="#5e5e5e"/><rect x="1806" y="203.0" width="5" height="1.5" fill="#5e5e5e"/><rect x="1811" y="203.0" width="1" height="1.5" fill="#5e5e5e"/><rect x="1812" y="203.0" width="4" height="1.5" fill="#32628c"/><rect x="1816" y="203.0" width="1" height="1.5" fill="#5e5e5e"/><rect x="1817" y="203.0" width="12" height="1.5" fill="#5e5e5e"/><rect x="1829" y="203.0" width="1" height="1.5" fill="#5e5e5e"/><rect x="1830" y="203.0" width="5" height="1.5" fill="#5e5e5e"/><rect x="1835" y="203.0" width="1" height="1.5" fill="#5e5e5e"/><rect x="1836" y="203.0" width="4" height="1.5" fill="#5e5e5e"/><rect x="1840" y="203.0" width="1" height="1.5" fill="#5e5e5e"/><rect x="1801" y="207.0" width="2" height="1.5" fill="#32628c"/><rect x="1803" y="207.0" width="1" height="1.5" fill="#5e5e5e"/><rect x="1804" y="207.0" width="4" height="1.5" fill="#32628c"/><rect x="1808" y="207.0" width="1" height="1.5" fill="#5e5e5e"/><rect x="1809" y="207.0" width="5" height="1.5" fill="#5e5e5e"/><rect x="1814" y="207.0" width="1" height="1.5" fill="#5e5e5e"/><rect x="1815" y="207.0" width="1" height="1.5" fill="#5e5e5e"/><rect x="1816" y="207.0" width="1" height="1.5" fill="#5e5e5e"/><rect x="1817" y="207.0" width="4" height="1.5" fill="#32628c"/><rect x="1821" y="207.0" width="1" height="1.5" fill="#5e5e5e"/><rect x="1822" y="207.0" width="12" height="1.5" fill="#5e5e5e"/><rect x="1834" y="207.0" width="1" height="1.5" fill="#5e5e5e"/><rect x="1835" y="207.0" width="5" height="1.5" fill="#5e5e5e"/><rect x="1840" y="207.0" width="1" height="1.5" fill="#5e5e5e"/><rect x="1841" y="207.0" width="4" height="1.5" fill="#5e5e5e"/><rect x="1845" y="207.0" width="1" height="1.5" fill="#5e5e5e"/><rect x="1846" y="207.0" width="1" height="1.5" fill="#5e5e5e"/><rect x="1803" y="209.0" width="4" height="1.5" fill="#32628c"/><rect x="1807" y="209.0" width="1" height="1.5" fill="#5e5e5e"/><rect x="1808" y="209.0" width="7" height="1.5" fill="#5e5e5e"/><rect x="1815" y="209.0" width="1" height="1.5" fill="#5e5e5e"/><rect x="1816" y="209.0" width="9" height="1.5" fill="#5e5e5e"/><rect x="1825" y="209.0" width="1" height="1.5" fill="#5e5e5e"/><rect x="1826" y="209.0" width="4" height="1.5" fill="#5e5e5e"/><rect x="1830" y="209.0" width="1" height="1.5" fill="#5e5e5e"/><rect x="1831" y="209.0" width="4" height="1.5" fill="#5e5e5e"/><rect x="1835" y="209.0" width="1" height="1.5" fill="#5e5e5e"/><rect x="1836" y="209.0" width="1" height="1.5" fill="#5e5e5e"/><rect x="1837" y="209.0" width="4" height="1.5" fill="#32628c"/><rect x="1841" y="209.0" width="1" height="1.5" fill="#5e5e5e"/><rect x="1842" y="209.0" width="6" height="1.5" fill="#5e5e5e"/><rect x="1848" y="209.0" width="1" height="1.5" fill="#5e5e5e"/><rect x="1849" y="209.0" width="13" height="1.5" fill="#5e5e5e"/><rect x="1862" y="209.0" width="1" height="1.5" fill="#5e5e5e"/><rect x="1863" y="209.0" width="7" height="1.5" fill="#7e5e4c"/><rect x="1870" y="209.0" width="1" height="1.5" fill="#5e5e5e"/><rect x="1871" y="209.0" width="1" height="1.5" fill="#5e5e5e"/><rect x="1803" y="211.0" width="4" height="1.5" fill="#32628c"/><rect x="1807" y="211.0" width="1" height="1.5" fill="#5e5e5e"/><rect x="1808" y="211.0" width="8" height="1.5" fill="#5e5e5e"/><rect x="1816" y="211.0" width="1" height="1.5" fill="#5e5e5e"/><rect x="1817" y="211.0" width="7" height="1.5" fill="#5e5e5e"/><rect x="1824" y="211.0" width="1" height="1.5" fill="#5e5e5e"/><rect x="1825" y="211.0" width="4" height="1.5" fill="#5e5e5e"/><rect x="1829" y="211.0" width="1" height="1.5" fill="#5e5e5e"/><rect x="1830" y="211.0" width="1" height="1.5" fill="#5e5e5e"/><rect x="1803" y="213.0" width="4" height="1.5" fill="#32628c"/><rect x="1807" y="213.0" width="1" height="1.5" fill="#5e5e5e"/><rect x="1808" y="213.0" width="6" height="1.5" fill="#5e5e5e"/><rect x="1814" y="213.0" width="1" height="1.5" fill="#5e5e5e"/><rect x="1815" y="213.0" width="8" height="1.5" fill="#5e5e5e"/><rect x="1823" y="213.0" width="1" height="1.5" fill="#5e5e5e"/><rect x="1824" y="213.0" width="1" height="1.5" fill="#5e5e5e"/><rect x="1825" y="213.0" width="6" height="1.5" fill="#7e5e4c"/><rect x="1831" y="213.0" width="1" height="1.5" fill="#5e5e5e"/><rect x="1832" y="213.0" width="1" height="1.5" fill="#5e5e5e"/><rect x="1833" y="213.0" width="1" height="1.5" fill="#5e5e5e"/><rect x="1801" y="215.0" width="1" height="1.5" fill="#5e5e5e"/><rect x="1801" y="217.0" width="1" height="1.5" fill="#5e5e5e"/><rect x="1801" y="219.0" width="4" height="1.5" fill="#32628c"/><rect x="1805" y="219.0" width="1" height="1.5" fill="#5e5e5e"/><rect x="1803" y="221.0" width="4" height="1.5" fill="#32628c"/><rect x="1807" y="221.0" width="1" height="1.5" fill="#5e5e5e"/><rect x="1808" y="221.0" width="9" height="1.5" fill="#5e5e5e"/><rect x="1817" y="221.0" width="1" height="1.5" fill="#5e5e5e"/><rect x="1818" y="221.0" width="4" height="1.5" fill="#5e5e5e"/><rect x="1822" y="221.0" width="1" height="1.5" fill="#5e5e5e"/><rect x="1823" y="221.0" width="6" height="1.5" fill="#7e5e4c"/><rect x="1830" y="221.0" width="9" height="1.5" fill="#7e5e4c"/><rect x="1839" y="221.0" width="1" height="1.5" fill="#5e5e5e"/><rect x="1840" y="221.0" width="4" height="1.5" fill="#7e5e4c"/><rect x="1844" y="221.0" width="1" height="1.5" fill="#5e5e5e"/><rect x="1845" y="221.0" width="1" height="1.5" fill="#5e5e5e"/><rect x="1846" y="221.0" width="8" height="1.5" fill="#5e5e5e"/><rect x="1854" y="221.0" width="1" height="1.5" fill="#5e5e5e"/><rect x="1855" y="221.0" width="1" height="1.5" fill="#5e5e5e"/><rect x="1856" y="221.0" width="1" height="1.5" fill="#5e5e5e"/><rect x="1857" y="221.0" width="1" height="1.5" fill="#5e5e5e"/><rect x="1858" y="221.0" width="1" height="1.5" fill="#5e5e5e"/><rect x="1859" y="221.0" width="1" height="1.5" fill="#5e5e5e"/><rect x="1860" y="221.0" width="1" height="1.5" fill="#5e5e5e"/><rect x="1861" y="221.0" width="1" height="1.5" fill="#5e5e5e"/><rect x="1801" y="223.0" width="1" height="1.5" fill="#5e5e5e"/><rect x="1799" y="225.0" width="1" height="1.5" fill="#5e5e5e"/><rect x="1805" y="227.0" width="1" height="1.5" fill="#5e5e5e"/><rect x="1806" y="227.0" width="1" height="1.5" fill="#5e5e5e"/><rect x="1807" y="227.0" width="1" height="1.5" fill="#5e5e5e"/><rect x="1793" y="231.0" width="1" height="1.5" fill="#5e5e5e"/><rect x="1793" y="235.0" width="5" height="1.5" fill="#5e5e5e"/><rect x="1799" y="235.0" width="1" height="1.5" fill="#5e5e5e"/><rect x="1801" y="235.0" width="3" height="1.5" fill="#32628c"/><rect x="1805" y="235.0" width="11" height="1.5" fill="#5e5e5e"/><rect x="1816" y="235.0" width="1" height="1.5" fill="#5e5e5e"/><rect x="1817" y="235.0" width="2" height="1.5" fill="#7e5e4c"/><rect x="1819" y="235.0" width="1" height="1.5" fill="#5e5e5e"/><rect x="1821" y="235.0" width="1" height="1.5" fill="#5e5e5e"/><rect x="1822" y="235.0" width="10" height="1.5" fill="#5e5e5e"/><rect x="1832" y="235.0" width="1" height="1.5" fill="#5e5e5e"/><rect x="1833" y="235.0" width="8" height="1.5" fill="#5e5e5e"/><rect x="1841" y="235.0" width="1" height="1.5" fill="#5e5e5e"/><rect x="1843" y="235.0" width="10" height="1.5" fill="#5e5e5e"/><rect x="1853" y="235.0" width="1" height="1.5" fill="#5e5e5e"/><rect x="1854" y="235.0" width="5" height="1.5" fill="#5e5e5e"/><rect x="1859" y="235.0" width="1" height="1.5" fill="#5e5e5e"/><rect x="1860" y="235.0" width="1" height="1.5" fill="#5e5e5e"/><rect x="1861" y="235.0" width="1" height="1.5" fill="#5e5e5e"/><rect x="1793" y="237.0" width="4" height="1.5" fill="#5e5e5e"/><rect x="1798" y="237.0" width="1" height="1.5" fill="#5e5e5e"/><rect x="1800" y="237.0" width="3" height="1.5" fill="#32628c"/><rect x="1804" y="237.0" width="11" height="1.5" fill="#5e5e5e"/><rect x="1815" y="237.0" width="1" height="1.5" fill="#5e5e5e"/><rect x="1816" y="237.0" width="2" height="1.5" fill="#7e5e4c"/><rect x="1818" y="237.0" width="1" height="1.5" fill="#5e5e5e"/><rect x="1820" y="237.0" width="1" height="1.5" fill="#5e5e5e"/><rect x="1821" y="237.0" width="10" height="1.5" fill="#5e5e5e"/><rect x="1831" y="237.0" width="1" height="1.5" fill="#5e5e5e"/><rect x="1832" y="237.0" width="8" height="1.5" fill="#5e5e5e"/><rect x="1840" y="237.0" width="1" height="1.5" fill="#5e5e5e"/><rect x="1841" y="237.0" width="1" height="1.5" fill="#5e5e5e"/><rect x="1842" y="237.0" width="1" height="1.5" fill="#5e5e5e"/><rect x="1793" y="239.0" width="15" height="1.5" fill="#5e5e5e"/><rect x="1808" y="239.0" width="1" height="1.5" fill="#5e5e5e"/><rect x="1809" y="239.0" width="1" height="1.5" fill="#5e5e5e"/><rect x="1811" y="239.0" width="1" height="1.5" fill="#5e5e5e"/><rect x="1795" y="241.0" width="2" height="1.5" fill="#32628c"/><rect x="1798" y="241.0" width="1" height="1.5" fill="#5e5e5e"/><rect x="1799" y="241.0" width="4" height="1.5" fill="#32628c"/><rect x="1803" y="241.0" width="1" height="1.5" fill="#5e5e5e"/><rect x="1804" y="241.0" width="5" height="1.5" fill="#5e5e5e"/><rect x="1809" y="241.0" width="1" height="1.5" fill="#5e5e5e"/><rect x="1810" y="241.0" width="8" height="1.5" fill="#5e5e5e"/><rect x="1818" y="241.0" width="1" height="1.5" fill="#5e5e5e"/><rect x="1819" y="241.0" width="10" height="1.5" fill="#7e5e4c"/><rect x="1829" y="241.0" width="1" height="1.5" fill="#5e5e5e"/><rect x="1830" y="241.0" width="1" height="1.5" fill="#5e5e5e"/><rect x="1832" y="241.0" width="1" height="1.5" fill="#5e5e5e"/><rect x="1797" y="243.0" width="6" height="1.5" fill="#32628c"/><rect x="1804" y="243.0" width="4" height="1.5" fill="#7e5e4c"/><rect x="1809" y="243.0" width="4" height="1.5" fill="#7e5e4c"/><rect x="1814" y="243.0" width="5" height="1.5" fill="#7e5e4c"/><rect x="1820" y="243.0" width="1" height="1.5" fill="#7e5e4c"/><rect x="1822" y="243.0" width="6" height="1.5" fill="#7e5e4c"/><rect x="1828" y="243.0" width="1" height="1.5" fill="#5e5e5e"/><rect x="1795" y="245.0" width="1" height="1.5" fill="#5e5e5e"/><rect x="1795" y="249.0" width="6" height="1.5" fill="#32628c"/><rect x="1802" y="249.0" width="4" height="1.5" fill="#32628c"/><rect x="1806" y="249.0" width="1" height="1.5" fill="#5e5e5e"/><rect x="1807" y="249.0" width="5" height="1.5" fill="#5e5e5e"/><rect x="1812" y="249.0" width="1" height="1.5" fill="#5e5e5e"/><rect x="1813" y="249.0" width="8" height="1.5" fill="#5e5e5e"/><rect x="1821" y="249.0" width="1" height="1.5" fill="#5e5e5e"/><rect x="1822" y="249.0" width="7" height="1.5" fill="#7e5e4c"/><rect x="1829" y="249.0" width="1" height="1.5" fill="#5e5e5e"/><rect x="1831" y="249.0" width="1" height="1.5" fill="#5e5e5e"/><rect x="1833" y="249.0" width="4" height="1.5" fill="#7e5e4c"/><rect x="1838" y="249.0" width="1" height="1.5" fill="#7e5e4c"/><rect x="1840" y="249.0" width="5" height="1.5" fill="#7e5e4c"/><rect x="1846" y="249.0" width="6" height="1.5" fill="#7e5e4c"/><rect x="1853" y="249.0" width="1" height="1.5" fill="#5e5e5e"/><rect x="1855" y="249.0" width="2" height="1.5" fill="#7e5e4c"/><rect x="1857" y="249.0" width="1" height="1.5" fill="#5e5e5e"/><rect x="1793" y="251.0" width="1" height="1.5" fill="#5e5e5e"/><rect x="1793" y="253.0" width="4" height="1.5" fill="#5e5e5e"/><rect x="1798" y="253.0" width="1" height="1.5" fill="#5e5e5e"/><rect x="1800" y="253.0" width="4" height="1.5" fill="#32628c"/><rect x="1804" y="253.0" width="1" height="1.5" fill="#5e5e5e"/><rect x="1793" y="255.0" width="8" height="1.5" fill="#5e5e5e"/><rect x="1801" y="255.0" width="1" height="1.5" fill="#5e5e5e"/><rect x="1802" y="255.0" width="1" height="1.5" fill="#5e5e5e"/><rect x="1804" y="255.0" width="1" height="1.5" fill="#5e5e5e"/><rect x="1795" y="257.0" width="4" height="1.5" fill="#32628c"/><rect x="1799" y="257.0" width="1" height="1.5" fill="#5e5e5e"/><rect x="1800" y="257.0" width="6" height="1.5" fill="#5e5e5e"/><rect x="1806" y="257.0" width="1" height="1.5" fill="#5e5e5e"/><rect x="1807" y="257.0" width="13" height="1.5" fill="#5e5e5e"/><rect x="1820" y="257.0" width="1" height="1.5" fill="#5e5e5e"/><rect x="1821" y="257.0" width="7" height="1.5" fill="#7e5e4c"/><rect x="1828" y="257.0" width="1" height="1.5" fill="#5e5e5e"/><rect x="1829" y="257.0" width="1" height="1.5" fill="#5e5e5e"/><rect x="1791" y="259.0" width="1" height="1.5" fill="#5e5e5e"/><rect x="1791" y="261.0" width="10" height="1.5" fill="#5e5e5e"/><rect x="1801" y="261.0" width="1" height="1.5" fill="#5e5e5e"/><rect x="1802" y="261.0" width="1" height="1.5" fill="#5e5e5e"/><rect x="1803" y="261.0" width="1" height="1.5" fill="#5e5e5e"/><rect x="1793" y="263.0" width="4" height="1.5" fill="#32628c"/><rect x="1797" y="263.0" width="1" height="1.5" fill="#5e5e5e"/><rect x="1798" y="263.0" width="6" height="1.5" fill="#5e5e5e"/><rect x="1804" y="263.0" width="1" height="1.5" fill="#5e5e5e"/><rect x="1805" y="263.0" width="13" height="1.5" fill="#5e5e5e"/><rect x="1818" y="263.0" width="1" height="1.5" fill="#5e5e5e"/><rect x="1819" y="263.0" width="9" height="1.5" fill="#7e5e4c"/><rect x="1828" y="263.0" width="1" height="1.5" fill="#5e5e5e"/><rect x="1829" y="263.0" width="1" height="1.5" fill="#5e5e5e"/><rect x="1791" y="265.0" width="1" height="1.5" fill="#5e5e5e"/><rect x="1791" y="269.0" width="18" height="1.5" fill="#5e5e5e"/><rect x="1809" y="269.0" width="1" height="1.5" fill="#5e5e5e"/><rect x="1810" y="269.0" width="1" height="1.5" fill="#5e5e5e"/><rect x="1811" y="269.0" width="1" height="1.5" fill="#5e5e5e"/><rect x="1793" y="271.0" width="4" height="1.5" fill="#32628c"/><rect x="1797" y="271.0" width="1" height="1.5" fill="#5e5e5e"/><rect x="1798" y="271.0" width="6" height="1.5" fill="#5e5e5e"/><rect x="1804" y="271.0" width="1" height="1.5" fill="#5e5e5e"/><rect x="1805" y="271.0" width="13" height="1.5" fill="#5e5e5e"/><rect x="1818" y="271.0" width="1" height="1.5" fill="#5e5e5e"/><rect x="1819" y="271.0" width="17" height="1.5" fill="#7e5e4c"/><rect x="1836" y="271.0" width="1" height="1.5" fill="#5e5e5e"/><rect x="1837" y="271.0" width="1" height="1.5" fill="#5e5e5e"/><rect x="1791" y="273.0" width="1" height="1.5" fill="#5e5e5e"/><rect x="1791" y="275.0" width="12" height="1.5" fill="#5e5e5e"/><rect x="1803" y="275.0" width="1" height="1.5" fill="#5e5e5e"/><rect x="1804" y="275.0" width="7" height="1.5" fill="#5e5e5e"/><rect x="1811" y="275.0" width="1" height="1.5" fill="#5e5e5e"/><rect x="1813" y="275.0" width="6" height="1.5" fill="#5e5e5e"/><rect x="1819" y="275.0" width="1" height="1.5" fill="#5e5e5e"/><rect x="1821" y="275.0" width="6" height="1.5" fill="#5e5e5e"/><rect x="1827" y="275.0" width="1" height="1.5" fill="#5e5e5e"/><rect x="1829" y="275.0" width="6" height="1.5" fill="#5e5e5e"/><rect x="1835" y="275.0" width="1" height="1.5" fill="#5e5e5e"/><rect x="1837" y="275.0" width="1" height="1.5" fill="#5e5e5e"/><rect x="1793" y="277.0" width="4" height="1.5" fill="#32628c"/><rect x="1797" y="277.0" width="1" height="1.5" fill="#5e5e5e"/><rect x="1798" y="277.0" width="9" height="1.5" fill="#5e5e5e"/><rect x="1807" y="277.0" width="1" height="1.5" fill="#5e5e5e"/><rect x="1808" y="277.0" width="4" height="1.5" fill="#5e5e5e"/><rect x="1812" y="277.0" width="1" height="1.5" fill="#5e5e5e"/><rect x="1813" y="277.0" width="7" height="1.5" fill="#5e5e5e"/><rect x="1820" y="277.0" width="1" height="1.5" fill="#5e5e5e"/><rect x="1822" y="277.0" width="6" height="1.5" fill="#5e5e5e"/><rect x="1828" y="277.0" width="1" height="1.5" fill="#5e5e5e"/><rect x="1829" y="277.0" width="1" height="1.5" fill="#5e5e5e"/><rect x="1791" y="279.0" width="1" height="1.5" fill="#5e5e5e"/><rect x="1791" y="283.0" width="1" height="1.5" fill="#5e5e5e"/></svg><div class="a" style="left:1903px;top:109px;width:1px;height:894px;background:#3a3a3a"></div><div class="a" style="left:1903px;top:156px;width:4px;height:262px;background:#5a5a5a"></div><div class="a" style="left:0;top:1003px;width:1907px;height:26px;background:#007acc"></div><div class="a" style="left:0;top:1003px;width:43px;height:26px;background:#16825d"></div><svg class="a" style="left:13px;top:1008px" width="16" height="16" viewBox="0 0 16 16" fill="none" stroke="#ffffff" stroke-width="1.3"><path d="M1.5 14 L6 9.5 L1.5 5 M14.5 2 L10 6.5 L14.5 11"/></svg><svg class="a" style="left:53px;top:1008px" width="16" height="16" viewBox="0 0 16 16" fill="none" stroke="#fff" stroke-width="1.2"><circle cx="8" cy="8" r="7"/><path d="M5 5 L11 11 M11 5 L5 11"/></svg><div class="t" style="left:73px;color:#ffffff;font-size:15px;top:1008px">0</div><svg class="a" style="left:87px;top:1007px" width="17" height="16" viewBox="0 0 17 16" fill="none" stroke="#fff" stroke-width="1.2"><path d="M8.5 1 L16 15 H1 Z M8.5 6 V11 M8.5 12.5 V13.5"/></svg><div class="t" style="left:107px;color:#ffffff;font-size:15px;top:1008px">0</div><svg class="a" style="left:136px;top:1007px" width="18" height="18" viewBox="0 0 18 18" fill="none" stroke="#fff" stroke-width="1.4"><path d="M2 11 C3 6 7 4 12 5 V2 L17 6.5 L12 11 V8 C8 8 5 9 2 11 Z"/><circle cx="6.5" cy="14.5" r="2.5"/></svg><div class="t" style="left:158px;color:#ffffff;font-size:15px;top:1008px;transform:scaleX(0.96);transform-origin:0 0">Live Share</div><svg class="a" style="left:245px;top:1008px" width="16" height="16" viewBox="0 0 16 16" fill="none" stroke="#fff" stroke-width="1.4"><path d="M2.5 8 A5.5 5.5 0 0 1 12.5 4.5 M13.5 8 A5.5 5.5 0 0 1 3.5 11.5 M12.5 1.5 V4.5 H9.5 M3.5 14.5 V11.5 H6.5"/></svg><div class="t" style="left:266px;color:#ffffff;font-size:15px;top:1008px;transform:scaleX(0.974);transform-origin:0 0">Initializing JS/TS language features</div><div class="t" style="left:1443px;color:#ffffff;font-size:15px;top:1008px;transform:scaleX(0.94);transform-origin:0 0">Ln 1, Col 1</div><div class="t" style="left:1531px;color:#ffffff;font-size:15px;top:1008px;transform:scaleX(0.95);transform-origin:0 0">Spaces: 2</div><div class="t" style="left:1612px;color:#ffffff;font-size:15px;top:1008px;transform:scaleX(0.95);transform-origin:0 0">UTF-8</div><div class="t" style="left:1672px;color:#ffffff;font-size:15px;top:1008px;transform:scaleX(1);transform-origin:0 0">LF</div><div class="t" style="left:1706px;color:#ffffff;font-size:15px;top:1008px;transform:scaleX(0.975);transform-origin:0 0">TypeScript</div><div class="t" style="left:1794px;color:#ffffff;font-size:15px;top:1008px;transform:scaleX(0.97);transform-origin:0 0">4.3.5</div><svg class="a" style="left:1847px;top:1007px" width="19" height="18" viewBox="0 0 19 18" fill="none" stroke="#fff" stroke-width="1.2"><path d="M8 2 H17.5 V9 H12 L10 11"/><circle cx="6" cy="8" r="3"/><path d="M1 17 C1 13 3 11.5 6 11.5 C9 11.5 11 13 11 17"/></svg><svg class="a" style="left:1882px;top:1006px" width="20" height="20" viewBox="0 0 20 20" fill="none" stroke="#fff" stroke-width="1.3"><path d="M2.5 15.5 H15.5 L14 13 V9 C14 6 12 4 9 4 C6 4 4 6 4 9 V13 Z M7.5 16.5 A1.5 1.5 0 0 0 10.5 16.5"/><circle cx="15.5" cy="4" r="3.2" fill="#fff" stroke="none"/></svg></body></html>
